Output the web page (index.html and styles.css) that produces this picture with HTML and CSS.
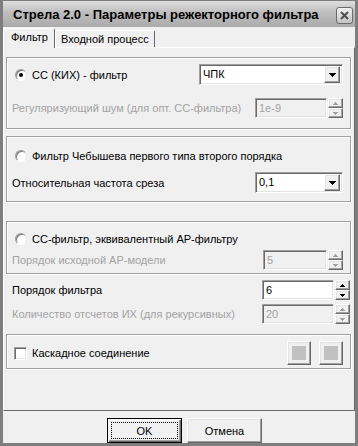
FILE: index.html
```html
<!DOCTYPE html>
<html>
  <head>
    <meta charset="UTF-8">
    <title>Стрела 2.0 - Параметры режекторного фильтра</title>
    <link rel="stylesheet" href="styles.css">
  </head>
  <body>
    <div class="window">
      <div class="title-bar">
        <span class="title">Стрела 2.0 - Параметры режекторного фильтра</span>
        <span class="close-button">
          <svg width="9" height="9" viewBox="0 0 9 9"><path d="M1 1 L8 8 M8 1 L1 8" stroke="#505050" stroke-width="2"/></svg>
        </span>
      </div>
      <div class="client">
        <div class="tabs">
          <div class="tab active">Фильтр</div>
          <div class="tab">Входной процесс</div>
        </div>
        <div class="panel">
          <div class="group group-kih">
            <div class="row first">
              <label class="option"><span class="radio checked"></span>СС (КИХ) - фильтр</label>
              <div class="combo"><span class="value">ЧПК</span><span class="drop-button"><svg width="7" height="4" viewBox="0 0 7 4"><path d="M0 0h7v1H0zM1 1h5v1H1zM2 2h3v1H2zM3 3h1v1H3z"/></svg></span></div>
            </div>
            <div class="row">
              <span class="caption disabled">Регуляризующий шум (для опт. СС-фильтра)</span>
              <div class="spin">
                <span class="field off">1e-9</span>
                <span class="spin-buttons off">
                  <span class="spin-button"><svg width="5" height="3" viewBox="0 0 5 3"><path d="M2 0h1v1H2zM1 1h3v1H1zM0 2h5v1H0z"/></svg></span>
                  <span class="spin-button"><svg width="5" height="3" viewBox="0 0 5 3"><path d="M0 0h5v1H0zM1 1h3v1H1zM2 2h1v1H2z"/></svg></span>
                </span>
              </div>
            </div>
          </div>

          <div class="group group-cheb">
            <div class="row first">
              <label class="option"><span class="radio"></span>Фильтр Чебышева первого типа второго порядка</label>
            </div>
            <div class="row">
              <span class="caption">Относительная частота среза</span>
              <div class="combo narrow"><span class="value">0,1</span><span class="drop-button"><svg width="7" height="4" viewBox="0 0 7 4"><path d="M0 0h7v1H0zM1 1h5v1H1zM2 2h3v1H2zM3 3h1v1H3z"/></svg></span></div>
            </div>
          </div>

          <div class="group group-ar">
            <div class="row first">
              <label class="option"><span class="radio"></span>СС-фильтр, эквивалентный АР-фильтру</label>
            </div>
            <div class="row">
              <span class="caption disabled">Порядок исходной АР-модели</span>
              <div class="spin">
                <span class="field off short">5</span>
                <span class="spin-buttons off">
                  <span class="spin-button"><svg width="5" height="3" viewBox="0 0 5 3"><path d="M2 0h1v1H2zM1 1h3v1H1zM0 2h5v1H0z"/></svg></span>
                  <span class="spin-button"><svg width="5" height="3" viewBox="0 0 5 3"><path d="M0 0h5v1H0zM1 1h3v1H1zM2 2h1v1H2z"/></svg></span>
                </span>
              </div>
            </div>
          </div>

          <div class="plain-rows">
            <div class="row">
              <span class="caption">Порядок фильтра</span>
              <div class="spin">
                <span class="field">6</span>
                <span class="spin-buttons">
                  <span class="spin-button"><svg width="5" height="3" viewBox="0 0 5 3"><path d="M2 0h1v1H2zM1 1h3v1H1zM0 2h5v1H0z"/></svg></span>
                  <span class="spin-button"><svg width="5" height="3" viewBox="0 0 5 3"><path d="M0 0h5v1H0zM1 1h3v1H1zM2 2h1v1H2z"/></svg></span>
                </span>
              </div>
            </div>
            <div class="row">
              <span class="caption disabled">Количество отсчетов ИХ (для рекурсивных)</span>
              <div class="spin">
                <span class="field off">20</span>
                <span class="spin-buttons off">
                  <span class="spin-button"><svg width="5" height="3" viewBox="0 0 5 3"><path d="M2 0h1v1H2zM1 1h3v1H1zM0 2h5v1H0z"/></svg></span>
                  <span class="spin-button"><svg width="5" height="3" viewBox="0 0 5 3"><path d="M0 0h5v1H0zM1 1h3v1H1zM2 2h1v1H2z"/></svg></span>
                </span>
              </div>
            </div>
          </div>

          <div class="group group-cascade">
            <div class="row">
              <label class="option check"><span class="checkbox"></span>Каскадное соединение</label>
              <div class="square-buttons">
                <span class="square-button"><span class="square"></span></span>
                <span class="square-button"><span class="square"></span></span>
              </div>
            </div>
          </div>
        </div>
        <div class="dialog-buttons">
          <button type="button" class="default-button"><span class="focus">OK</span></button>
          <button type="button">Отмена</button>
        </div>
      </div>
    </div>
  </body>
</html>
```

FILE: styles.css
```css
body {
  margin: 0;
  font-family: "Liberation Sans", Arial, sans-serif;
  font-size: 11px;
  color: #000;
}
.window {
  width: 358px;
  height: 446px;
  box-sizing: border-box;
  border: 3px solid #7e7e7e;
  border-top-width: 1px;
  background: #f0f0f0;
  display: flex;
  flex-direction: column;
}
.title-bar {
  height: 26px;
  flex: none;
  display: flex;
  align-items: center;
  justify-content: space-between;
  padding: 0 2px 0 10px;
  background: linear-gradient(#dedede, #bdbdbd 45%, #ababab);
}
.title {
  font-weight: bold;
  font-size: 13px;
}
.close-button {
  width: 15px;
  height: 15px;
  margin-top: 3px;
  border: 1px solid #6a6a6a;
  border-radius: 3px;
  background: linear-gradient(#f0f0f0, #c4c4c4);
  display: flex;
  align-items: center;
  justify-content: center;
}
.client {
  flex: 1;
  display: flex;
  flex-direction: column;
}
.tabs {
  height: 21px;
  box-sizing: border-box;
  padding-top: 1px;
  margin-bottom: -1px;
  display: flex;
  align-items: flex-end;
  position: relative;
  z-index: 1;
}
.tab {
  height: 17px;
  box-sizing: border-box;
  margin-bottom: 1px;
  padding: 1px 5px 0 5px;
  border: 1px solid;
  border-color: #fff #696969 transparent #fff;
  border-bottom: none;
  border-radius: 2px 2px 0 0;
  line-height: 14px;
}
.tab.active {
  height: 20px;
  margin-bottom: 0;
  padding: 1px 6px 0 7px;
  background: #f0f0f0;
}
.panel {
  height: 364px;
  box-sizing: border-box;
  border: 1px solid;
  border-color: #fff #696969 #696969 #fff;
  padding: 9px 3px 0 2px;
}
.group {
  border: 1px solid #a0a0a0;
  box-shadow: inset 1px 1px #fff, 1px 1px #fff;
  padding: 0 7px 0 5px;
  display: flex;
  flex-direction: column;
}
.row {
  display: flex;
  align-items: center;
  justify-content: space-between;
  height: 20px;
}
.row.first {
  height: 21px;
}
.group-kih {
  padding-top: 6px;
  padding-bottom: 10px;
  gap: 13px;
}
.group-cheb {
  margin-top: 7px;
  padding-top: 8px;
  padding-bottom: 8px;
  gap: 6px;
}
.group-cheb .row {
  height: 21px;
}
.group-ar {
  margin-top: 19px;
  padding-top: 6px;
  padding-bottom: 3px;
  gap: 1px;
}
.plain-rows {
  margin-top: 6px;
  padding: 0 1px 0 6px;
  display: flex;
  flex-direction: column;
  gap: 4px;
}
.group-cascade {
  margin-top: 10px;
  padding-top: 6px;
  padding-bottom: 3px;
}
.group-cascade .row {
  height: 24px;
}
.option {
  display: flex;
  align-items: center;
  gap: 5px;
  margin-left: 3px;
}
.option.check {
  margin-left: 2px;
}
.caption.disabled {
  color: #a3a3a3;
}
.radio {
  width: 12px;
  height: 12px;
  box-sizing: border-box;
  border-radius: 50%;
  border: 1px solid;
  border-color: #9a9a9a #e8e8e8 #fff #9a9a9a;
  background: #fff;
  box-shadow: inset 1px 1px #777;
  display: flex;
  align-items: center;
  justify-content: center;
}
.radio.checked::after {
  content: "";
  width: 4px;
  height: 4px;
  border-radius: 50%;
  background: #000;
}
.checkbox {
  width: 13px;
  height: 13px;
  box-sizing: border-box;
  border: 1px solid;
  border-color: #a0a0a0 #fff #fff #a0a0a0;
  background: #fff;
  box-shadow: inset 1px 1px #696969, inset -1px -1px #e3e3e3;
}
.combo {
  width: 144px;
  height: 21px;
  box-sizing: border-box;
  border: 1px solid;
  border-color: #a0a0a0 #fff #fff #a0a0a0;
  box-shadow: inset 1px 1px #696969, inset -1px -1px #e3e3e3;
  background: #fff;
  padding: 2px;
  display: flex;
  align-items: center;
}
.combo.narrow {
  width: 88px;
}
.combo .value {
  flex: 1;
  padding-left: 1px;
  line-height: 15px;
}
.drop-button,
.spin-button,
.square-button {
  box-sizing: border-box;
  border: 1px solid;
  border-color: #fff #696969 #696969 #fff;
  box-shadow: inset -1px -1px #a0a0a0, inset 1px 1px #e3e3e3;
  background: #f0f0f0;
  display: flex;
  align-items: center;
  justify-content: center;
}
.drop-button {
  width: 16px;
  height: 17px;
}
.drop-button svg {
  fill: #000;
}
.spin {
  display: flex;
  gap: 1px;
}
.field {
  width: 72px;
  height: 20px;
  box-sizing: border-box;
  border: 1px solid;
  border-color: #a0a0a0 #fff #fff #a0a0a0;
  box-shadow: inset 1px 1px #696969, inset -1px -1px #e3e3e3;
  background: #fff;
  padding: 2px 3px;
  line-height: 15px;
}
.field.short {
  width: 64px;
}
.field.off {
  background: #f0f0f0;
  color: #a3a3a3;
}
.spin-buttons {
  width: 15px;
  display: flex;
  flex-direction: column;
}
.spin-button {
  height: 10px;
}
.spin-button svg {
  fill: #000;
}
.spin-buttons.off svg {
  fill: #a0a0a0;
}
.square-buttons {
  display: flex;
  gap: 8px;
}
.square-button {
  width: 24px;
  height: 24px;
}
.square {
  width: 14px;
  height: 14px;
  background: #c0c0c0;
}
.dialog-buttons {
  display: flex;
  gap: 5px;
  padding: 7px 0 0 104px;
}
.dialog-buttons button {
  width: 75px;
  height: 25px;
  box-sizing: border-box;
  margin: 0;
  padding: 0;
  font-family: "Liberation Sans", Arial, sans-serif;
  font-size: 11px;
  color: #000;
  background: #f0f0f0;
  border: 1px solid;
  border-color: #fff #696969 #696969 #fff;
  box-shadow: inset -1px -1px #a0a0a0, inset 1px 1px #e3e3e3;
}
.dialog-buttons .default-button {
  border: 1px solid #000;
  box-shadow: inset 1px 1px #fff, inset -1px -1px #696969, inset -2px -2px #a0a0a0;
  padding: 3px;
}
.focus {
  display: flex;
  align-items: center;
  justify-content: center;
  height: 100%;
  box-sizing: border-box;
  border: 1px dotted #000;
}
```
